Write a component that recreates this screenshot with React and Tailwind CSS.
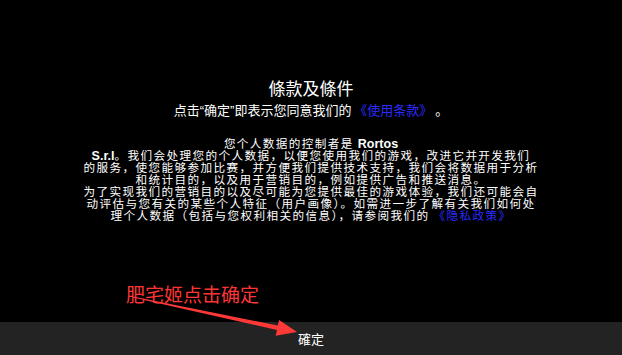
const bodyLines = [
  [{ t: "您个人数据的控制者是 " }, { t: "Rortos", b: true }],
  [{ t: "S.r.l", b: true }, { t: "。我们会处理您的个人数据，以便您使用我们的游戏，改进它并开发我们" }],
  [{ t: "的服务，使您能够参加比赛，并方便我们提供技术支持，我们会将数据用于分析" }],
  [{ t: "和统计目的，以及用于营销目的，例如提供广告和推送消息。" }],
  [{ t: "为了实现我们的营销目的以及尽可能为您提供最佳的游戏体验，我们还可能会自" }],
  [{ t: "动评估与您有关的某些个人特征（用户画像）。如需进一步了解有关我们如何处" }],
  [{ t: "理个人数据（包括与您权利相关的信息），请参阅我们的 " }, { t: "《隐私政策》", link: true }],
];

export default function App() {
  return (
    <div className="relative flex h-[355px] w-[622px] flex-col overflow-hidden bg-black text-white font-['Noto_Sans_CJK_SC',sans-serif]">
      <main className="flex flex-1 flex-col items-center pt-[77px]">
        <h1 className="h-[22px] text-[17px] leading-[22px] font-normal">條款及條件</h1>
        <p className="mt-[3px] h-[16px] text-[13px] leading-[16px] whitespace-nowrap">
          点击<span className="font-['Liberation_Sans']">“</span>确定<span className="font-['Liberation_Sans']">”</span>即表示您同意我们的 <span className="text-[#2b2bff]">《使用条款》</span> 。
        </p>

        <div className="mt-[19px] flex flex-col items-center text-[11.6px] tracking-[1.4px]">
          {bodyLines.map((line, i) => (
            <div key={i} className="h-[12px] whitespace-nowrap text-center leading-[12px]">
              {line.map((part, j) => (
                <span
                  key={j}
                  className={
                    part.b
                      ? "font-['Liberation_Sans'] text-[12.5px] font-bold tracking-normal"
                      : part.link
                      ? "text-[#2b2bff]"
                      : ""
                  }
                >
                  {part.t}
                </span>
              ))}
            </div>
          ))}
        </div>
      </main>

      <footer className="flex h-[33px] items-center justify-center bg-[#232323]">
        <button className="text-[13px] leading-none text-white">確定</button>
      </footer>

      {/* red annotation drawn on top of the screenshot */}
      <div className="absolute left-[126px] top-[283px] text-[19px] leading-[22px] text-[#ff3535]">
        肥宅姬点击确定
      </div>
      <svg className="pointer-events-none absolute inset-0" width="622" height="355" viewBox="0 0 622 355">
        <polygon
          fill="#ff3838"
          points="133,296.4 277.8,325.6 279.1,320 297,332 275.7,335.8 277,330 133,297.6"
        />
      </svg>
    </div>
  );
}
